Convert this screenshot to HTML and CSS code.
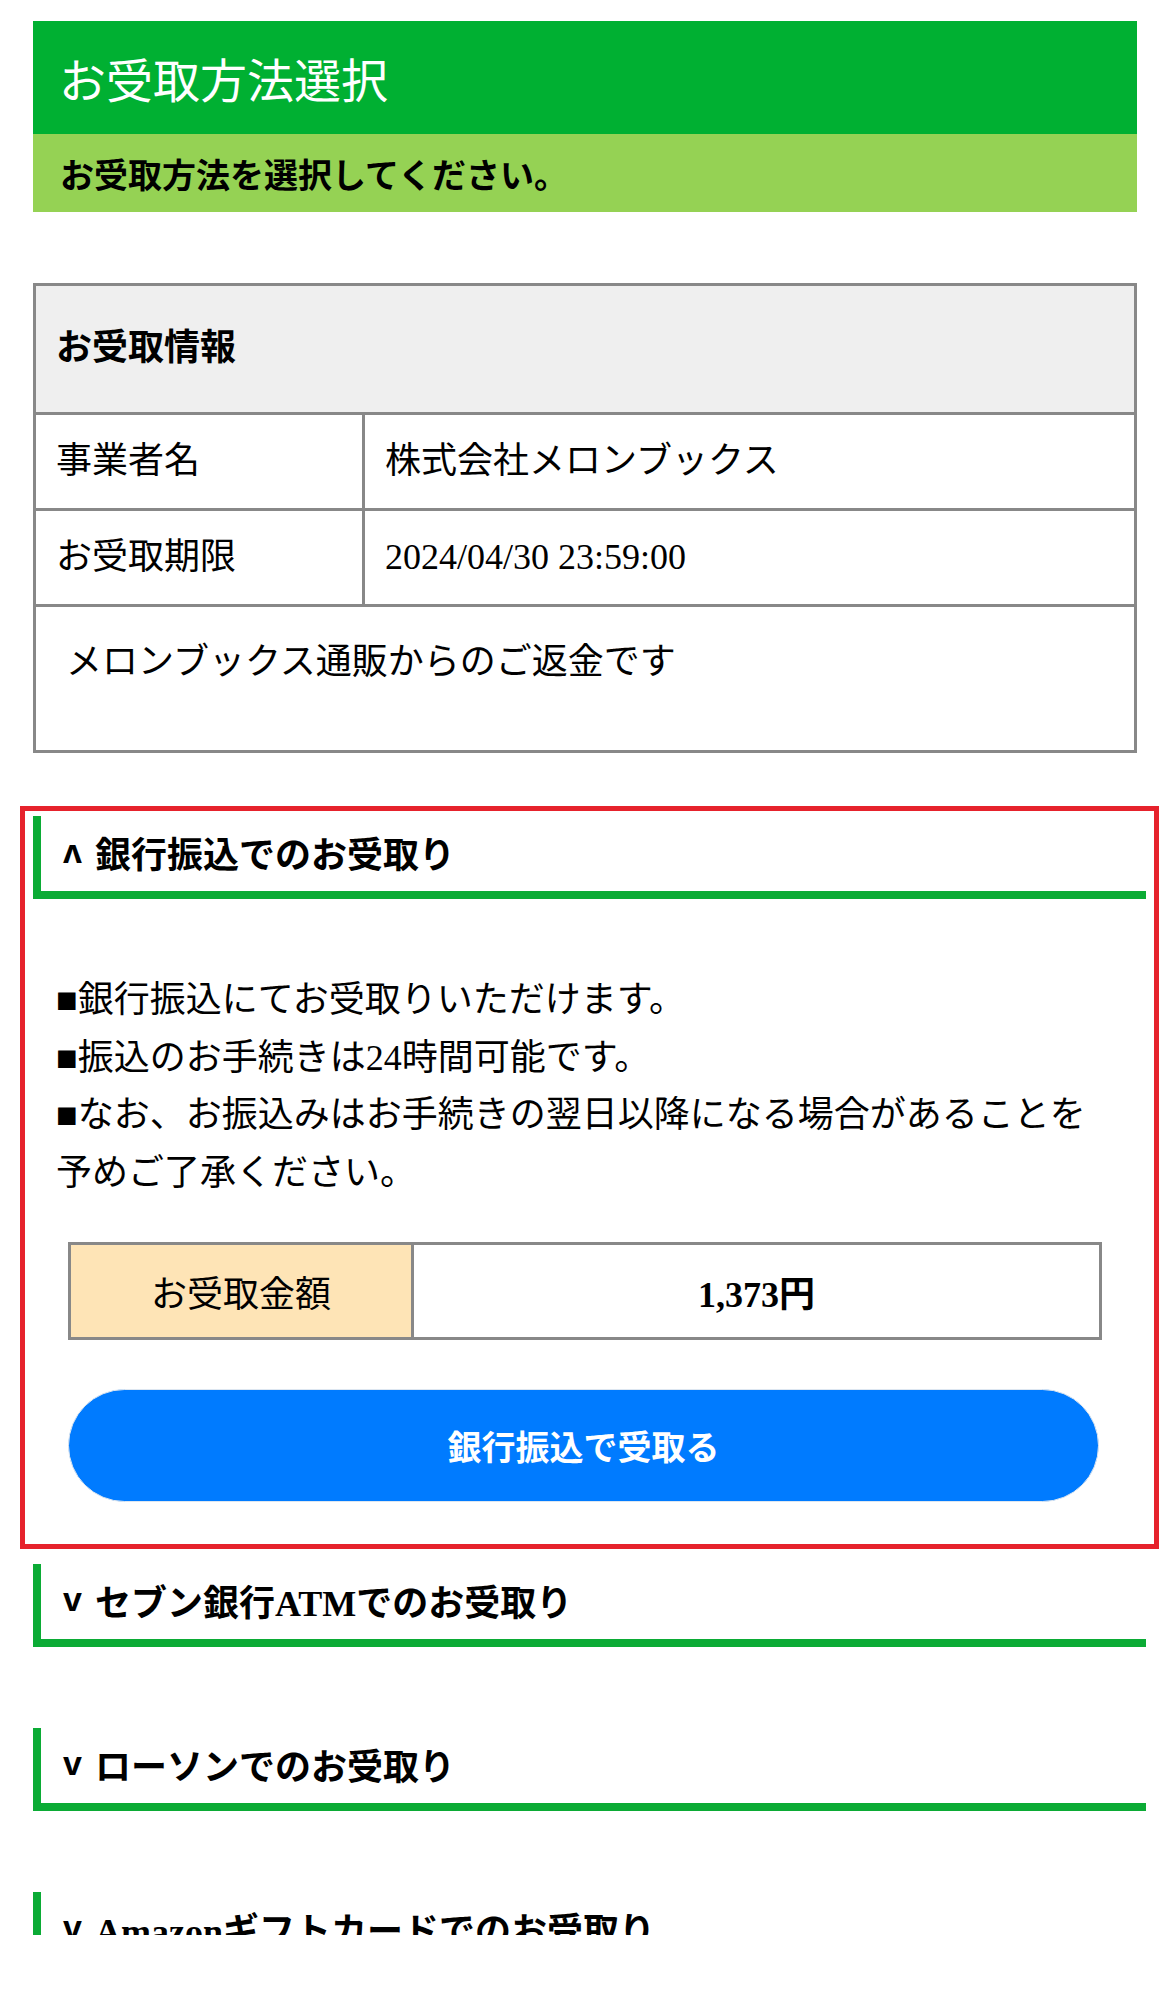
FILE: index.html
```html
<!DOCTYPE html>
<html lang="ja">
<head>
  <meta charset="UTF-8">
  <meta name="viewport" content="width=device-width, initial-scale=1.0">
  <title>お受取方法選択</title>
  <link rel="stylesheet" href="styles.css">
</head>
<body>
  <div class="page">
    <h1 class="title">お受取方法選択</h1>
    <p class="lead">お受取方法を選択してください。</p>

    <table class="info">
      <tr class="info-head">
        <th colspan="2">お受取情報</th>
      </tr>
      <tr>
        <td class="key">事業者名</td>
        <td>株式会社メロンブックス</td>
      </tr>
      <tr>
        <td class="key">お受取期限</td>
        <td>2024/04/30 23:59:00</td>
      </tr>
      <tr class="info-note">
        <td colspan="2">メロンブックス通販からのご返金です</td>
      </tr>
    </table>

    <div class="picked">
      <section class="method">
        <h2 class="method-head"><span class="caret">ʌ</span>銀行振込でのお受取り</h2>
        <div class="method-body">
          <p class="notes">
            <span class="mark">■</span>銀行振込にてお受取りいただけます。<br>
            <span class="mark">■</span>振込のお手続きは24時間可能です。<br>
            <span class="mark">■</span>なお、お振込みはお手続きの翌日以降になる場合があることを予めご了承ください。
          </p>
          <table class="amount">
            <tr>
              <td class="amount-key">お受取金額</td>
              <td class="amount-value">1,373円</td>
            </tr>
          </table>
          <button class="receive" type="button">銀行振込で受取る</button>
        </div>
      </section>
    </div>

    <section class="method closed first">
      <h2 class="method-head"><span class="caret">v</span>セブン銀行ATMでのお受取り</h2>
    </section>
    <section class="method closed">
      <h2 class="method-head"><span class="caret">v</span>ローソンでのお受取り</h2>
    </section>
    <section class="method closed">
      <h2 class="method-head"><span class="caret">v</span>Amazonギフトカードでのお受取り</h2>
    </section>
  </div>
</body>
</html>
```

FILE: styles.css
```css
* {
  box-sizing: border-box;
}
body {
  margin: 0;
  background: #fff;
  color: #000;
  font-family: "Liberation Serif", "Noto Sans CJK JP", serif;
}
.page {
  height: 1935px;
  overflow: hidden;
  padding-top: 21px;
}
.title {
  margin: 0 33px;
  height: 113px;
  padding-left: 26px;
  display: flex;
  align-items: center;
  background-color: #00b032;
  color: white;
  font-size: 47px;
  font-weight: normal;
}
.lead {
  margin: 0 33px;
  height: 78px;
  padding-left: 27px;
  display: flex;
  align-items: center;
  background-color: #95d254;
  font-size: 34px;
  font-weight: bold;
}
.info {
  width: 1104px;
  margin: 71px 33px 0;
  border-collapse: collapse;
  border: 3px solid #888;
  font-size: 36px;
}
.info th, .info td {
  border: 3px solid #888;
  padding: 0 20px;
  text-align: left;
  vertical-align: middle;
  line-height: 1.6;
}
.info-head th {
  height: 129px;
  background-color: #efefef;
  font-weight: bold;
}
.info td {
  height: 96px;
}
.info .key {
  width: 329px;
}
.info-note td {
  height: 146px;
  vertical-align: top;
  padding: 27px 30px;
}
.picked {
  width: 1139px;
  margin: 53px 0 0 20px;
  border: 5px solid #e6222c;
  padding: 5px 8px 0;
}
.method-head {
  margin: 0;
  height: 83px;
  padding: 0 0 4px 22px;
  display: flex;
  align-items: center;
  border-left: 8px solid #0bab35;
  border-bottom: 8px solid #0bab35;
  font-size: 36px;
  font-weight: bold;
}
.caret {
  width: 32px;
  font-family: "Liberation Sans", "DejaVu Sans", sans-serif;
  font-size: 34px;
}
.method-body {
  padding: 73px 44px 42px 35px;
}
.notes {
  margin: 0 0 40px -12px;
  font-size: 36px;
  line-height: 57.5px;
}
.mark {
  font-family: "Liberation Serif", serif;
}
.amount {
  width: 1034px;
  height: 98px;
  border-collapse: collapse;
  border: 3px solid #888;
  font-size: 36px;
}
.amount td {
  border: 3px solid #888;
  text-align: center;
  vertical-align: middle;
}
.amount-key {
  width: 343px;
  background-color: #fee4b6;
}
.amount-value {
  font-weight: bold;
}
.receive {
  display: block;
  width: 1031px;
  height: 113px;
  margin-top: 49px;
  border: 1px solid #dde6f0;
  border-radius: 57px;
  background-color: #007bff;
  color: white;
  font-family: "Noto Sans CJK JP", sans-serif;
  font-size: 34px;
  font-weight: bold;
}
.closed {
  margin: 81px 24px 0 33px;
}
.closed.first {
  margin-top: 15px;
}
```
